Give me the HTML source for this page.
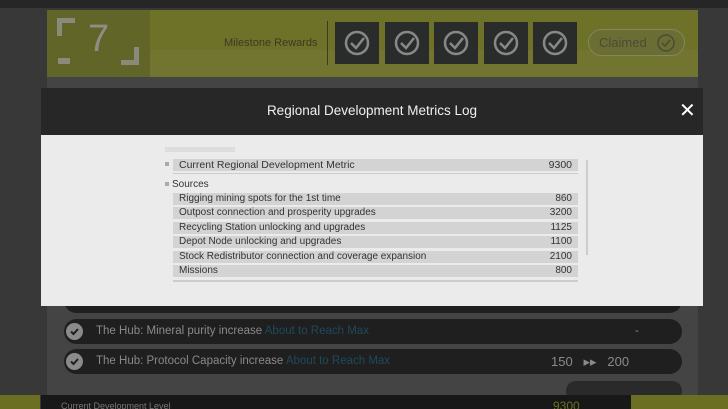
<!DOCTYPE html>
<html><head><meta charset="utf-8"><style>
*{margin:0;padding:0;box-sizing:border-box}
html,body{width:728px;height:409px;overflow:hidden}
body{background:#383838;font-family:"Liberation Sans",sans-serif;position:relative}
.a{position:absolute}
.rw{position:absolute;left:173px;width:405px;height:12px;background:#d3d3d3;font-size:10px;color:#333;line-height:12px;padding:0 6px}
.rw span{float:right}
.pill{position:absolute;left:64px;width:618px;height:25px;background:#1f1f1f;border-radius:13px;color:#8a8a8a;font-size:11.5px;line-height:25px}
.ck{position:absolute;left:2px;top:4px}
.rb{position:absolute;top:22px;width:44px;height:42px;background:#2a2c2c}
.rb svg{position:absolute;left:9px;top:8px}
</style></head><body>
<div class="a" style="left:0;top:0;width:728px;height:8px;background:#262626"></div>
<div class="a" style="left:47px;top:10px;width:651px;height:67px;background:#6e7128"></div>
<div class="a" style="left:150px;top:50px;width:548px;height:27px;background:#72752f"></div>
<div class="a" style="left:47px;top:10px;width:103px;height:67px;background:#626528"></div>
<div class="a" style="left:88px;top:18px;font-size:38px;color:#8e8e86">7</div>
<div class="a" style="left:57px;top:18px;width:18px;height:18px;border-left:5px solid #8a8a7a;border-top:5px solid #8a8a7a"></div>
<div class="a" style="left:121px;top:47px;width:18px;height:18px;border-right:5px solid #8a8a7a;border-bottom:5px solid #8a8a7a"></div>
<div class="a" style="left:58px;top:58px;width:12px;height:6px;background:#8a8a7a"></div>
<div class="a" style="left:224px;top:37px;font-size:11px;color:#3a3a26">Milestone Rewards</div>
<div class="a" style="left:327px;top:21px;width:1px;height:44px;background:#3a3a26"></div>
<div class="rb" style="left:335px"><svg width="26" height="26"><circle cx="13" cy="13" r="11" fill="none" stroke="#888" stroke-width="2.5"/><path d="M7 13l5 5 8-10" fill="none" stroke="#888" stroke-width="2.5"/></svg></div>
<div class="rb" style="left:385px"><svg width="26" height="26"><circle cx="13" cy="13" r="11" fill="none" stroke="#888" stroke-width="2.5"/><path d="M7 13l5 5 8-10" fill="none" stroke="#888" stroke-width="2.5"/></svg></div>
<div class="rb" style="left:434px"><svg width="26" height="26"><circle cx="13" cy="13" r="11" fill="none" stroke="#888" stroke-width="2.5"/><path d="M7 13l5 5 8-10" fill="none" stroke="#888" stroke-width="2.5"/></svg></div>
<div class="rb" style="left:484px"><svg width="26" height="26"><circle cx="13" cy="13" r="11" fill="none" stroke="#888" stroke-width="2.5"/><path d="M7 13l5 5 8-10" fill="none" stroke="#888" stroke-width="2.5"/></svg></div>
<div class="rb" style="left:533px"><svg width="26" height="26"><circle cx="13" cy="13" r="11" fill="none" stroke="#888" stroke-width="2.5"/><path d="M7 13l5 5 8-10" fill="none" stroke="#888" stroke-width="2.5"/></svg></div>
<div class="a" style="left:588px;top:29px;width:97px;height:27px;border-radius:14px;background:#6a6d34;border:1px solid #85885a;color:#4a4c34;font-size:13px;line-height:25px;padding-left:10px">Claimed</div>
<svg class="a" style="left:656px;top:33px" width="20" height="20"><circle cx="10" cy="10" r="8" fill="none" stroke="#4a4c34" stroke-width="1.5"/><path d="M6 10l3 3 5-6" fill="none" stroke="#4a4c34" stroke-width="1.5"/></svg>
<div class="a" style="left:47px;top:77px;width:651px;height:320px;background:#444"></div>
<div class="pill" style="top:288px"></div>
<div class="pill" style="top:319px"><svg class="ck" width="17" height="17"><circle cx="8.5" cy="8.5" r="8.5" fill="#8a8a8a"/><path d="M5 8.5l2.5 2.5 4.5-5" fill="none" stroke="#1f1f1f" stroke-width="2"/></svg><span style="margin-left:32px">The Hub: Mineral purity increase <span style="color:#1f4a5a">About to Reach Max</span></span><span style="position:absolute;left:571px">-</span></div>
<div class="pill" style="top:349px"><svg class="ck" width="17" height="17"><circle cx="8.5" cy="8.5" r="8.5" fill="#8a8a8a"/><path d="M5 8.5l2.5 2.5 4.5-5" fill="none" stroke="#1f1f1f" stroke-width="2"/></svg><span style="margin-left:32px">The Hub: Protocol Capacity increase <span style="color:#1f4a5a">About to Reach Max</span></span><span style="position:absolute;left:487px;font-size:13px">150 &nbsp; ▸▸ &nbsp; 200</span></div>
<div class="a" style="left:566px;top:381px;width:116px;height:20px;border-radius:10px;background:#2a2a2a"></div>
<div class="a" style="left:0;top:395px;width:40px;height:14px;background:#6b6f24"></div>
<div class="a" style="left:41px;top:395px;width:590px;height:14px;background:#181818;color:#777;font-size:9px;padding-left:20px;line-height:22px;overflow:hidden">Current Development Level<span style="position:absolute;left:512px;color:#6b6f24;font-size:12px">9300</span></div>
<div class="a" style="left:631px;top:395px;width:97px;height:14px;background:#6b6f24"></div>
<div class="a" style="left:41px;top:88px;width:662px;height:47px;background:#272727"></div>
<div class="a" style="left:41px;top:103px;width:662px;text-align:center;font-size:13.5px;color:#f0f0f0">Regional Development Metrics Log</div>
<div class="a" style="left:679px;top:100px;font-size:20px;color:#fff;line-height:22px">✕</div>
<div class="a" style="left:41px;top:135px;width:662px;height:171px;background:#ebebeb"></div>
<div class="a" style="left:165px;top:147px;width:70px;height:5px;background:#ddd"></div>
<div class="a" style="left:165px;top:162px;width:4px;height:4px;background:#aaa"></div>
<div class="rw" style="top:159px;font-size:10.5px">Current Regional Development Metric<span>9300</span></div>
<div class="a" style="left:173px;top:173px;width:405px;height:1px;background:#ccc"></div>
<div class="a" style="left:165px;top:182px;width:4px;height:4px;background:#aaa"></div>
<div class="a" style="left:172px;top:179px;font-size:10px;color:#333">Sources</div>
<div class="rw" style="top:193px">Rigging mining spots for the 1st time<span>860</span></div>
<div class="rw" style="top:207px">Outpost connection and prosperity upgrades<span>3200</span></div>
<div class="rw" style="top:222px">Recycling Station unlocking and upgrades<span>1125</span></div>
<div class="rw" style="top:236px">Depot Node unlocking and upgrades<span>1100</span></div>
<div class="rw" style="top:251px">Stock Redistributor connection and coverage expansion<span>2100</span></div>
<div class="rw" style="top:265px">Missions<span>800</span></div>
<div class="a" style="left:173px;top:280px;width:405px;height:2px;background:#ccc"></div>
<div class="a" style="left:586px;top:160px;width:2px;height:95px;background:#ccc"></div>
</body></html>
